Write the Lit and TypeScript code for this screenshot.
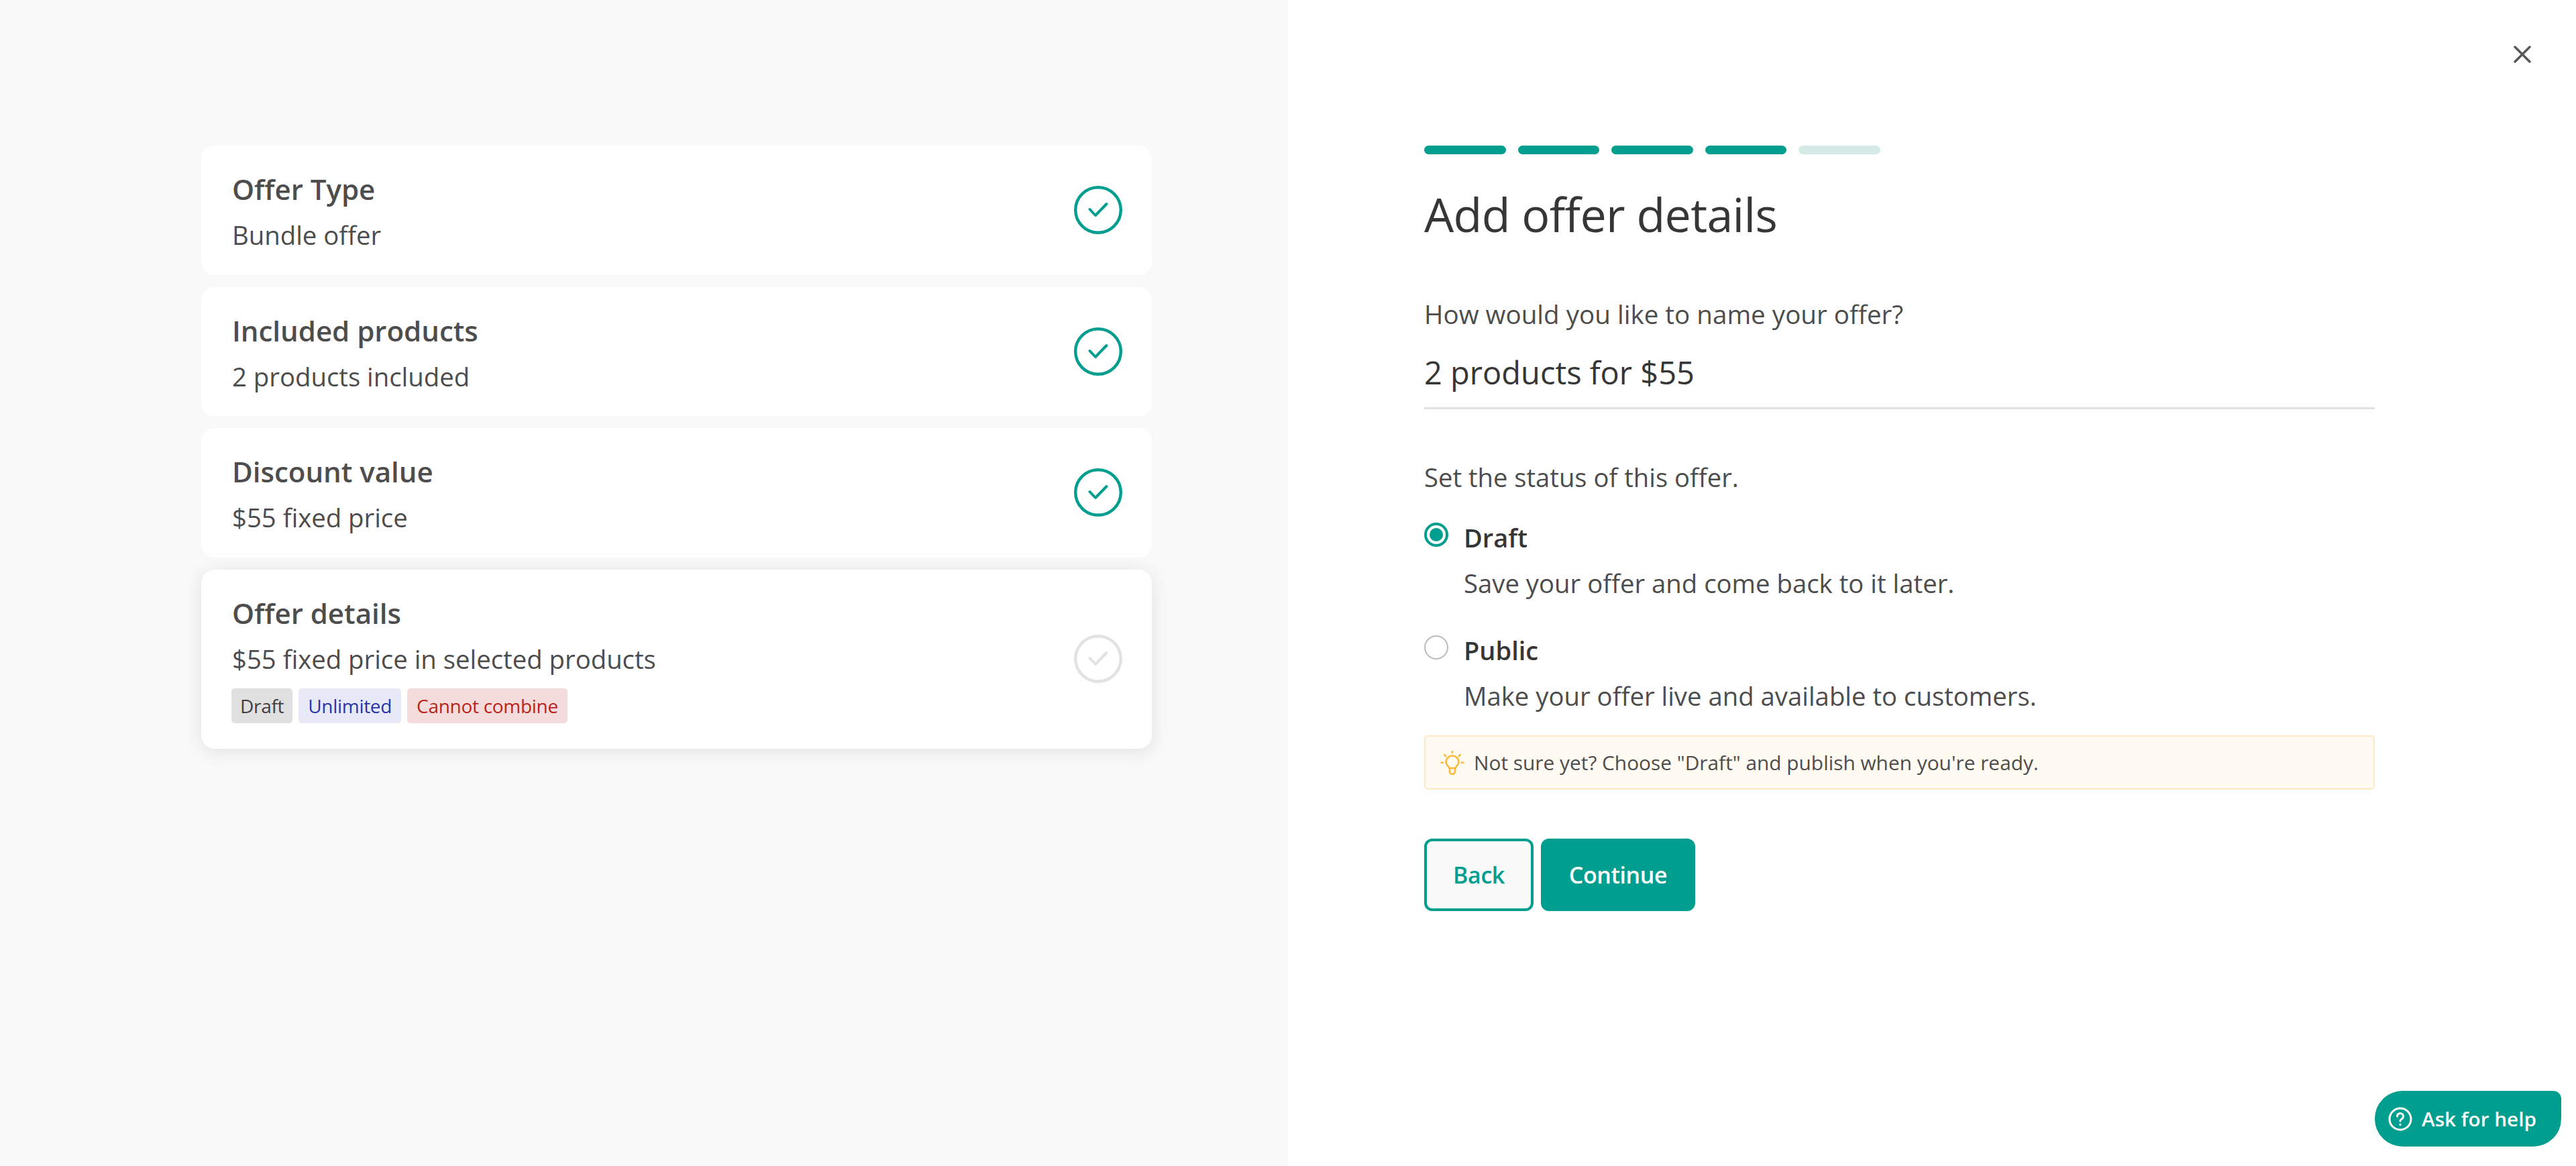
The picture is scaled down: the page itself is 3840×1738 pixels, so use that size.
import { LitElement, html, css } from "lit";
import { customElement } from "lit/decorators.js";

const checkCircle = html`
    <svg class="check" viewBox="0 0 72 72" fill="none" stroke="currentColor" stroke-linecap="round" stroke-linejoin="round">
        <circle cx="36" cy="36" r="33.8" stroke-width="4.4"></circle>
        <path d="M23.5 35l8.5 9 16.5-17" stroke-width="4"></path>
    </svg>
`;

const summary = [
    { title: "Offer Type", text: "Bundle offer" },
    { title: "Included products", text: "2 products included" },
    { title: "Discount value", text: "$55 fixed price" },
];

@customElement("app-root")
export class AppRoot extends LitElement {

    static styles = css`
        :host {
            display: block;
            height: 1738px;
            font-family: "Open Sans", "Noto Sans", sans-serif;
            color: #3a3a3a;
            position: relative;
            overflow: hidden;
        }
        .page {
            display: grid;
            grid-template-columns: 1920px 1920px;
            height: 100%;
        }
        .left {
            background: #f9f9f9;
            padding: 217px 203px 0 300px;
            display: flex;
            flex-direction: column;
            gap: 18px;
        }
        .card {
            background: #fff;
            border-radius: 20px;
            height: 192.5px;
            box-sizing: border-box;
            padding: 0 44px 0 46px;
            display: flex;
            align-items: center;
            justify-content: space-between;
        }
        .card.active {
            height: 267px;
            box-shadow: 0 4px 28px rgba(0, 0, 0, 0.1);
        }
        .card-body {
            align-self: flex-start;
            padding-top: 33px;
        }
        .card-title {
            font-size: 42px;
            font-weight: 600;
            line-height: 64px;
            color: #4d4d4d;
        }
        .card-text {
            font-size: 38.3px;
            line-height: 60px;
            margin-top: 6px;
            color: #4d4d4d;
        }
        .check {
            width: 72px;
            height: 72px;
            color: #009e8f;
            flex-shrink: 0;
        }
        .active .check {
            color: #e2e2e2;
        }
        .tags {
            display: flex;
            gap: 9px;
            margin-top: 14px;
            margin-left: -1px;
        }
        .tag {
            font-size: 28px;
            letter-spacing: -0.3px;
            line-height: 52px;
            padding: 0 14px;
            border-radius: 5px;
        }
        .tag.draft {
            background: #e0e0e0;
            color: #3f3f3f;
            padding: 0 13px;
        }
        .tag.unlimited {
            background: #e8e9f6;
            color: #2a35a8;
        }
        .tag.combine {
            background: #f4dcdc;
            color: #b8241a;
        }
        .right {
            padding: 217px 300px 0 203px;
            display: flex;
            flex-direction: column;
        }
        .steps {
            display: flex;
            gap: 18px;
        }
        .step {
            width: 121.5px;
            height: 13px;
            border-radius: 7px;
            background: #009e8f;
        }
        .step.todo {
            background: #d5eae7;
        }
        h1 {
            font-size: 70px;
            font-weight: 400;
            letter-spacing: -0.7px;
            line-height: 96px;
            margin: 41px 0 0;
            color: #363636;
        }
        .label {
            font-size: 38.6px;
            line-height: 56px;
            color: #4d4d4d;
        }
        .name-label {
            margin-top: 73px;
        }
        .name-input {
            font-size: 47px;
            line-height: 66px;
            margin-top: 26px;
            padding-bottom: 19px;
            border-bottom: 3px solid #e0e0e0;
            color: #363636;
        }
        .status-label {
            font-size: 38.2px;
            margin-top: 73px;
        }
        .option {
            display: grid;
            grid-template-columns: 36px 1fr;
            column-gap: 23px;
        }
        .option.first {
            margin-top: 36px;
        }
        .option.second {
            margin-top: 45.5px;
        }
        .radio {
            box-sizing: border-box;
            width: 36px;
            height: 36px;
            margin-top: 4px;
            border-radius: 50%;
            border: 2px solid #bdbdbd;
        }
        .radio.on {
            border: 4px solid #009e8f;
            padding: 4px;
        }
        .radio.on::before {
            content: "";
            display: block;
            width: 100%;
            height: 100%;
            border-radius: 50%;
            background: #009e8f;
        }
        .option-name {
            font-size: 38px;
            font-weight: 600;
            line-height: 52px;
            color: #363636;
        }
        .option-text {
            grid-column: 2;
            font-size: 38.3px;
            line-height: 56px;
            margin-top: 14px;
            color: #4d4d4d;
        }
        .hint {
            margin-top: 31.5px;
            height: 81px;
            box-sizing: border-box;
            display: flex;
            align-items: center;
            gap: 14px;
            padding-left: 22px;
            background: #fffaf2;
            border: 2px solid #ffe9c4;
            border-radius: 5px;
            font-size: 29.85px;
            color: #4d4d4d;
        }
        .bulb {
            width: 36px;
            height: 36px;
            flex-shrink: 0;
        }
        .actions {
            display: flex;
            gap: 11px;
            margin-top: 73px;
        }
        button {
            font: inherit;
            font-size: 34px;
            font-weight: 600;
            letter-spacing: -0.4px;
            height: 108px;
            border-radius: 12px;
            box-sizing: border-box;
        }
        .back {
            width: 163px;
            background: #f9f9f9;
            border: 4px solid #009e8f;
            color: #009e8f;
        }
        .continue {
            width: 230px;
            background: #009e8f;
            border: 0;
            color: #fff;
        }
        .close {
            position: absolute;
            top: 68px;
            left: 3747px;
            width: 26px;
            height: 26px;
        }
        .help {
            position: absolute;
            top: 1626px;
            left: 3540px;
            width: 278px;
            height: 83px;
            box-sizing: border-box;
            display: flex;
            align-items: center;
            gap: 14px;
            padding-left: 20px;
            background: #009e8f;
            color: #fff;
            border-radius: 42px 12px 42px 42px;
            font-size: 29.7px;
            font-weight: 600;
        }
        .help svg {
            width: 36px;
            height: 36px;
            flex-shrink: 0;
        }
    `;

    render() {
        return html`
            <div class="page">
                <div class="left">
                    ${summary.map((s) => html`
                        <div class="card">
                            <div class="card-body">
                                <div class="card-title">${s.title}</div>
                                <div class="card-text">${s.text}</div>
                            </div>
                            ${checkCircle}
                        </div>
                    `)}
                    <div class="card active">
                        <div class="card-body">
                            <div class="card-title">Offer details</div>
                            <div class="card-text">$55 fixed price in selected products</div>
                            <div class="tags">
                                <span class="tag draft">Draft</span>
                                <span class="tag unlimited">Unlimited</span>
                                <span class="tag combine">Cannot combine</span>
                            </div>
                        </div>
                        ${checkCircle}
                    </div>
                </div>
                <div class="right">
                    <div class="steps">
                        <div class="step"></div>
                        <div class="step"></div>
                        <div class="step"></div>
                        <div class="step"></div>
                        <div class="step todo"></div>
                    </div>
                    <h1>Add offer details</h1>
                    <div class="label name-label">How would you like to name your offer?</div>
                    <div class="name-input">2 products for $55</div>
                    <div class="label status-label">Set the status of this offer.</div>
                    <div class="option first">
                        <div class="radio on"></div>
                        <div class="option-name">Draft</div>
                        <div class="option-text">Save your offer and come back to it later.</div>
                    </div>
                    <div class="option second">
                        <div class="radio"></div>
                        <div class="option-name">Public</div>
                        <div class="option-text">Make your offer live and available to customers.</div>
                    </div>
                    <div class="hint">
                        <svg class="bulb" viewBox="0 0 36 36" fill="none" stroke="#fdb93a" stroke-width="2.6" stroke-linecap="round" stroke-linejoin="round">
                            <path d="M18 1v2M6.5 6l1.5 2M29.5 6L28 8M1.5 17.7h2.5M32 17.7h2.5"></path>
                            <path d="M13.5 26c-1-3-5-4.5-5-9a9.5 9.5 0 0 1 19 0c0 4.5-4 6-5 9z"></path>
                            <path d="M14 27v4a4 4 0 0 0 8 0v-4"></path>
                        </svg>
                        <span>Not sure yet? Choose "Draft" and publish when you're ready.</span>
                    </div>
                    <div class="actions">
                        <button class="back">Back</button>
                        <button class="continue">Continue</button>
                    </div>
                </div>
            </div>
            <svg class="close" viewBox="0 0 26 26" fill="none" stroke="#555" stroke-width="3.4" stroke-linecap="round">
                <path d="M2 2l22 22M24 2L2 24"></path>
            </svg>
            <div class="help">
                <svg viewBox="0 0 36 36" fill="none" stroke="#fff" stroke-width="3" stroke-linecap="round">
                    <circle cx="18" cy="18" r="16"></circle>
                    <path d="M13.5 14a4.5 4.5 0 1 1 7 3.7c-1.6 1-2.5 1.8-2.5 3.3"></path>
                    <path d="M18 26v.5"></path>
                </svg>
                <span>Ask for help</span>
            </div>
        `;
    }
}
